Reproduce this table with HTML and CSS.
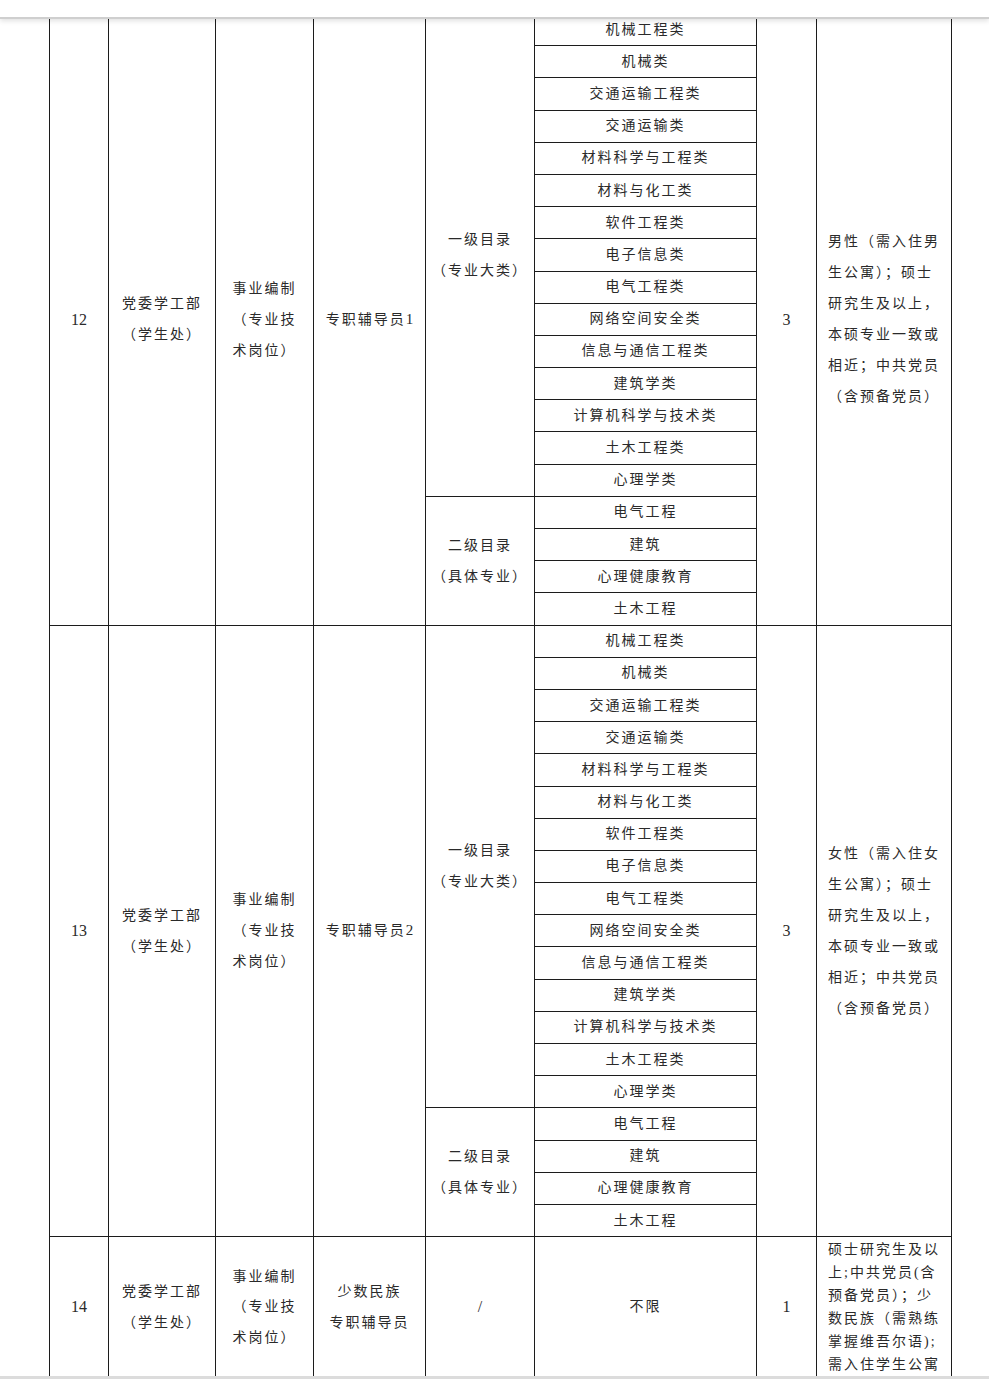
FILE: index.html
```html
<!DOCTYPE html>
<html lang="zh-CN">
<head>
<meta charset="utf-8">
<title>岗位表</title>
<link rel="stylesheet" href="styles.css">
</head>
<body>
<div class="topbar"></div>
<div class="viewport">
<table class="grid">
<colgroup>
<col class="c1"><col class="c2"><col class="c3"><col class="c4"><col class="c5"><col class="c6"><col class="c7"><col class="c8">
</colgroup>
<tbody>
<!-- 12 -->
<tr class="sub">
<td rowspan="19" class="num">12</td>
<td rowspan="19"><span class="ln">党委学工部</span><span class="ln">（学生处）</span></td>
<td rowspan="19"><span class="blk"><span class="ln">事业编制</span><span class="ln">（专业技</span><span class="ln">术岗位）</span></span></td>
<td rowspan="19">专职辅导员<span class="lat">1</span></td>
<td rowspan="15"><span class="ln">一级目录</span><span class="ln">（专业大类）</span></td>
<td>机械工程类</td>
<td rowspan="19" class="num">3</td>
<td rowspan="19"><span class="blk"><span class="ln">男性（需入住男</span><span class="ln">生公寓）；硕士</span><span class="ln">研究生及以上，</span><span class="ln">本硕专业一致或</span><span class="ln">相近；中共党员</span><span class="ln">（含预备党员）</span></span></td>
</tr>
<tr class="sub"><td>机械类</td></tr>
<tr class="sub"><td>交通运输工程类</td></tr>
<tr class="sub"><td>交通运输类</td></tr>
<tr class="sub"><td>材料科学与工程类</td></tr>
<tr class="sub"><td>材料与化工类</td></tr>
<tr class="sub"><td>软件工程类</td></tr>
<tr class="sub"><td>电子信息类</td></tr>
<tr class="sub"><td>电气工程类</td></tr>
<tr class="sub"><td>网络空间安全类</td></tr>
<tr class="sub"><td>信息与通信工程类</td></tr>
<tr class="sub"><td>建筑学类</td></tr>
<tr class="sub"><td>计算机科学与技术类</td></tr>
<tr class="sub"><td>土木工程类</td></tr>
<tr class="sub"><td>心理学类</td></tr>
<tr class="sub">
<td rowspan="4"><span class="ln">二级目录</span><span class="ln">（具体专业）</span></td>
<td>电气工程</td>
</tr>
<tr class="sub"><td>建筑</td></tr>
<tr class="sub"><td>心理健康教育</td></tr>
<tr class="sub"><td>土木工程</td></tr>
<!-- 13 -->
<tr class="sub">
<td rowspan="19" class="num">13</td>
<td rowspan="19"><span class="ln">党委学工部</span><span class="ln">（学生处）</span></td>
<td rowspan="19"><span class="blk"><span class="ln">事业编制</span><span class="ln">（专业技</span><span class="ln">术岗位）</span></span></td>
<td rowspan="19">专职辅导员<span class="lat">2</span></td>
<td rowspan="15"><span class="ln">一级目录</span><span class="ln">（专业大类）</span></td>
<td>机械工程类</td>
<td rowspan="19" class="num">3</td>
<td rowspan="19"><span class="blk"><span class="ln">女性（需入住女</span><span class="ln">生公寓）；硕士</span><span class="ln">研究生及以上，</span><span class="ln">本硕专业一致或</span><span class="ln">相近；中共党员</span><span class="ln">（含预备党员）</span></span></td>
</tr>
<tr class="sub"><td>机械类</td></tr>
<tr class="sub"><td>交通运输工程类</td></tr>
<tr class="sub"><td>交通运输类</td></tr>
<tr class="sub"><td>材料科学与工程类</td></tr>
<tr class="sub"><td>材料与化工类</td></tr>
<tr class="sub"><td>软件工程类</td></tr>
<tr class="sub"><td>电子信息类</td></tr>
<tr class="sub"><td>电气工程类</td></tr>
<tr class="sub"><td>网络空间安全类</td></tr>
<tr class="sub"><td>信息与通信工程类</td></tr>
<tr class="sub"><td>建筑学类</td></tr>
<tr class="sub"><td>计算机科学与技术类</td></tr>
<tr class="sub"><td>土木工程类</td></tr>
<tr class="sub"><td>心理学类</td></tr>
<tr class="sub">
<td rowspan="4"><span class="ln">二级目录</span><span class="ln">（具体专业）</span></td>
<td>电气工程</td>
</tr>
<tr class="sub"><td>建筑</td></tr>
<tr class="sub"><td>心理健康教育</td></tr>
<tr class="sub"><td>土木工程</td></tr>
<!-- 14 -->
<tr class="last">
<td class="num">14</td>
<td><span class="ln">党委学工部</span><span class="ln">（学生处）</span></td>
<td><span class="blk"><span class="ln">事业编制</span><span class="ln">（专业技</span><span class="ln">术岗位）</span></span></td>
<td><span class="ln">少数民族</span><span class="ln">专职辅导员</span></td>
<td class="num">/</td>
<td>不限</td>
<td class="num">1</td>
<td class="req"><span class="blk"><span class="ln">硕士研究生及以</span><span class="ln">上;中共党员(含</span><span class="ln">预备党员）；少</span><span class="ln">数民族（需熟练</span><span class="ln">掌握维吾尔语);</span><span class="ln">需入住学生公寓</span></span></td>
</tr>
</tbody>
</table>
</div>
<div class="bottombar"></div>
</body>
</html>
```

FILE: styles.css
```css
html, body {
  margin: 0;
  padding: 0;
  background: #ffffff;
  overflow: hidden;
}
body {
  width: 989px;
  height: 1379px;
  font-family: "Liberation Serif", "Noto Sans CJK SC", serif;
  font-size: 14px;
  color: #2a2a2a;
}
.topbar {
  position: relative;
  z-index: 2;
  height: 17px;
  background: #ffffff;
  border-bottom: 2px solid #cfcfcf;
  box-shadow: 0 2px 5px rgba(0, 0, 0, 0.12);
}
.viewport {
  height: 1357px;
  overflow: hidden;
}
.bottombar {
  height: 3px;
  background: #dcdcdc;
}
.grid {
  margin-top: -6px;
  margin-left: 49px;
  width: 903px;
  table-layout: fixed;
  border-collapse: collapse;
}
.c1 { width: 59px; }
.c2 { width: 107px; }
.c3 { width: 98px; }
.c4 { width: 112px; }
.c5 { width: 109px; }
.c6 { width: 222px; }
.c7 { width: 60px; }
.c8 { width: 135px; }
.grid td {
  border: 1px solid #1c1c1c;
  padding: 0;
  text-align: center;
  vertical-align: middle;
  letter-spacing: 2px;
  line-height: 31px;
  white-space: nowrap;
}
.grid tr.sub {
  height: 32.2px;
}
.grid tr.sub td {
  line-height: 20px;
}
.grid tr.sub td[rowspan] {
  line-height: 31px;
}
.ln {
  display: block;
}
.blk {
  display: inline-block;
  text-align: left;
}
.grid td.num {
  font-size: 16px;
  letter-spacing: 0;
}
.lat {
  font-size: 15px;
  letter-spacing: 0;
}
.grid tr.last td {
  line-height: 30.5px;
}
.grid tr.last td.req {
  line-height: 23px;
  padding: 1px 0 2px;
}
```
